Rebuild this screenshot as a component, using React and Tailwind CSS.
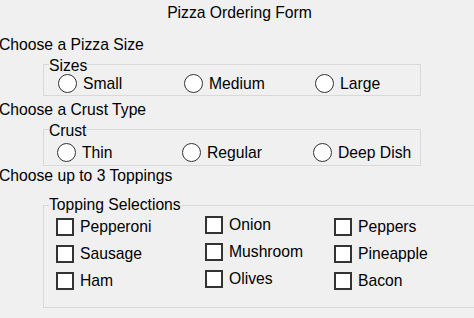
import React from "react";

function Radio({ label, w }) {
  return (
    <div className={`flex items-center gap-[6px] ${w}`}>
      <span className="w-[19px] h-[19px] rounded-full border-[1.5px] border-[#333333] bg-white shrink-0" />
      <span className="leading-[18px]">{label}</span>
    </div>
  );
}

function Check({ label }) {
  return (
    <div className="flex items-center gap-[6px] h-[18px]">
      <span className="w-[18px] h-[18px] border-2 border-[#333333] bg-white shrink-0" />
      <span className="leading-[18px]">{label}</span>
    </div>
  );
}

export default function App() {
  return (
    <div
      className="w-[474px] h-[318px] overflow-hidden bg-[#f0f0f0] text-black text-[15.7px]"
      style={{ fontFamily: '"Liberation Sans", Arial, sans-serif' }}
    >
      <div className="pt-[4px] pl-[5px] text-center leading-[18px]">Pizza Ordering Form</div>

      <div className="mt-[14px] -ml-[1px] leading-[18px]">Choose a Pizza Size</div>
      <fieldset className="ml-[43px] mt-[3px] w-[378px] border border-[#d9d9d9] pb-[2px]">
        <legend className="ml-[5px] leading-[14px] bg-[#f0f0f0]">
          <span className="relative top-[1.7px]">Sizes</span>
        </legend>
        <div className="flex mt-[3px] pl-[14px]">
          <Radio label="Small" w="w-[126px]" />
          <Radio label="Medium" w="w-[131px]" />
          <Radio label="Large" w="" />
        </div>
      </fieldset>

      <div className="mt-[5px] -ml-[1px] leading-[18px]">Choose a Crust Type</div>
      <fieldset className="ml-[43px] mt-[3px] w-[378px] border border-[#d9d9d9] pb-[3px]">
        <legend className="ml-[5px] leading-[14px] bg-[#f0f0f0]">
          <span className="relative top-[1.7px]">Crust</span>
        </legend>
        <div className="flex mt-[7px] pl-[13px]">
          <Radio label="Thin" w="w-[125px]" />
          <Radio label="Regular" w="w-[131px]" />
          <Radio label="Deep Dish" w="" />
        </div>
      </fieldset>

      <div className="mt-[1px] -ml-[1px] leading-[18px]">Choose up to 3 Toppings</div>
      <fieldset className="ml-[43px] mt-[11px] w-[440px] border border-[#d9d9d9] pb-[17px]">
        <legend className="ml-[5px] leading-[18px] bg-[#f0f0f0]">Topping Selections</legend>
        <div className="flex items-start pl-[12px]">
          <div className="flex flex-col gap-[9px] mt-[4px] w-[149px]">
            <Check label="Pepperoni" />
            <Check label="Sausage" />
            <Check label="Ham" />
          </div>
          <div className="flex flex-col gap-[9px] mt-[2px] w-[129px]">
            <Check label="Onion" />
            <Check label="Mushroom" />
            <Check label="Olives" />
          </div>
          <div className="flex flex-col gap-[9px] mt-[4px]">
            <Check label="Peppers" />
            <Check label="Pineapple" />
            <Check label="Bacon" />
          </div>
        </div>
      </fieldset>
    </div>
  );
}
